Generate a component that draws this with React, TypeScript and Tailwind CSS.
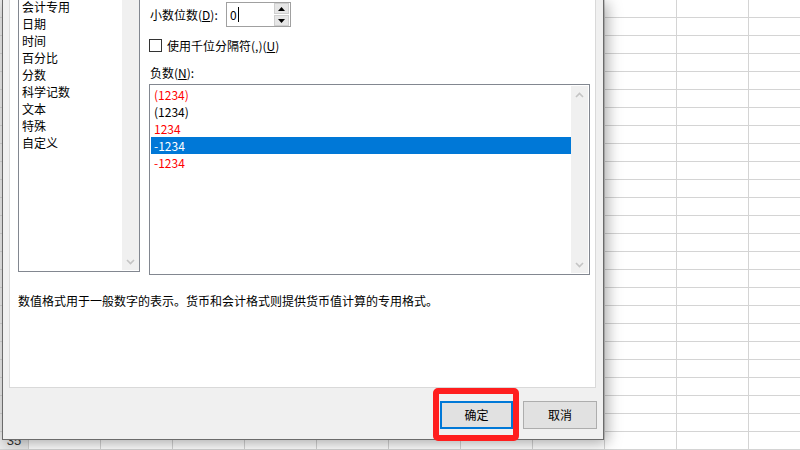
import React from "react";

const rows = Array.from({ length: 25 }, (_, i) => 11 + i);
const cols = Array.from({ length: 11 }, (_, i) => i);

const categories = ["会计专用", "日期", "时间", "百分比", "分数", "科学记数", "文本", "特殊", "自定义"];

const negatives = [
  { text: "(1234)", color: "text-[#ff0000]" },
  { text: "(1234)", color: "text-black" },
  { text: "1234", color: "text-[#ff0000]" },
  { text: "-1234", color: "text-white", selected: true },
  { text: "-1234", color: "text-[#ff0000]" },
];

function Chevron({ up }: { up?: boolean }) {
  return (
    <svg width="9" height="6" viewBox="0 0 9 6">
      <path
        d={up ? "M1 5 L4.5 1.5 L8 5" : "M1 1 L4.5 4.5 L8 1"}
        fill="none"
        stroke="#c4c4c4"
        strokeWidth="1.6"
      />
    </svg>
  );
}

function Scrollbar({ showUp }: { showUp?: boolean }) {
  return (
    <div className="w-[17px] bg-[#f0f0f0] flex flex-col items-center justify-between">
      <div className="h-[17px] flex items-center justify-center">{showUp && <Chevron up />}</div>
      <div className="h-[17px] flex items-center justify-center">
        <Chevron />
      </div>
    </div>
  );
}

function Sheet() {
  return (
    <div className="flex flex-col">
      {rows.map((r) => (
        <div key={r} className="flex h-[18px]">
          <div className="w-[29px] shrink-0 bg-[#ececec] border-r border-b border-[#d4d4d4] text-[13px] leading-[17px] text-center text-[#333] font-['Liberation_Sans',sans-serif]">
            {r}
          </div>
          {cols.map((c) => (
            <div key={c} className="w-[72px] shrink-0 border-r border-b border-[#d4d4d4]" />
          ))}
        </div>
      ))}
    </div>
  );
}

export default function App() {
  return (
    <div className="relative w-[800px] h-[450px] overflow-hidden bg-white font-['Noto_Sans_CJK_SC',sans-serif] text-[12px] text-black">
      <Sheet />

      {/* Format cells dialog */}
      <div className="absolute left-[2px] top-0 w-[602px] h-[440px] bg-[#f0f0f0] border border-t-0 border-[#6b6b6b] shadow-[3px_3px_14px_rgba(0,0,0,0.35)]">
        <div className="ml-[6px] w-[587px] h-[388px] bg-white border border-t-0 border-[#d9d9d9] pl-[8px]">
          <div className="flex items-start">
            {/* category list */}
            <div className="w-[122px] h-[272px] border border-t-0 border-[#828790] bg-white flex">
              <div className="flex-1 overflow-hidden">
                <div className="-mt-[2px]">
                  {categories.map((c) => (
                    <div key={c} className="h-[17px] leading-[17px] pl-[3px] whitespace-nowrap">
                      {c}
                    </div>
                  ))}
                </div>
              </div>
              <div className="flex mb-[1px]">
                <Scrollbar />
              </div>
            </div>

            {/* number options */}
            <div className="ml-[9px] pt-[2px] flex flex-col">
              <div className="flex items-center h-[25px]">
                <div className="w-[77px] pl-[1px] whitespace-nowrap">
                  小数位数(<span className="underline">D</span>):
                </div>
                <div className="w-[65px] h-[25px] border border-[#a0a0a0] bg-white flex">
                  <div className="flex-1 flex items-center pl-[3px]">
                    <span className="leading-[15px]">0</span>
                    <span className="w-px h-[15px] bg-black ml-[1px]" />
                  </div>
                  <div className="w-[15px] mr-[1px] flex flex-col gap-[1px]">
                    <div className="h-[11px] bg-[#e6e6e6] border border-[#cfcfcf] flex items-center justify-center">
                      <svg width="7" height="4" viewBox="0 0 7 4">
                        <path d="M0 4 L3.5 0 L7 4 Z" fill="#000" />
                      </svg>
                    </div>
                    <div className="h-[11px] bg-[#e6e6e6] border border-[#cfcfcf] flex items-center justify-center">
                      <svg width="7" height="4" viewBox="0 0 7 4">
                        <path d="M0 0 L3.5 4 L7 0 Z" fill="#000" />
                      </svg>
                    </div>
                  </div>
                </div>
              </div>

              <div className="flex items-center h-[17px] mt-[10px]">
                <div className="w-[13px] h-[13px] border border-[#333] bg-white" />
                <div className="ml-[5px] whitespace-nowrap">
                  使用千位分隔符(,)(<span className="underline">U</span>)
                </div>
              </div>

              <div className="h-[17px] leading-[17px] mt-[10px] pl-[1px]">
                负数(<span className="underline">N</span>):
              </div>

              <div className="mt-[3px] w-[441px] h-[191px] border border-[#828790] bg-white flex">
                <div className="flex-1 pl-[1px] pt-[1px]">
                  {negatives.map((n, i) => (
                    <div
                      key={i}
                      className={`h-[17px] leading-[17px] pl-[3px] ${n.color} ${n.selected ? "bg-[#0078d7]" : ""}`}
                    >
                      {n.text}
                    </div>
                  ))}
                </div>
                <div className="flex my-[1px] mr-[1px]">
                  <Scrollbar showUp />
                </div>
              </div>
            </div>
          </div>

          <div className="mt-[17px] h-[17px] leading-[17px] whitespace-nowrap">
            数值格式用于一般数字的表示。货币和会计格式则提供货币值计算的专用格式。
          </div>
        </div>

        <div className="flex justify-end gap-[10px] pr-[6px] mt-[13px]">
          <button className="w-[73px] h-[28px] border-2 border-[#0078d7] bg-[#e1e1e1] text-[12px]">确定</button>
          <button className="w-[74px] h-[28px] border border-[#adadad] bg-[#e1e1e1] text-[12px]">取消</button>
        </div>
      </div>

      {/* red highlight annotation */}
      <div className="absolute left-[433px] top-[388px] w-[86px] h-[53px] border-[6px] border-[#ff1e1e] rounded-[5px]" />
    </div>
  );
}
